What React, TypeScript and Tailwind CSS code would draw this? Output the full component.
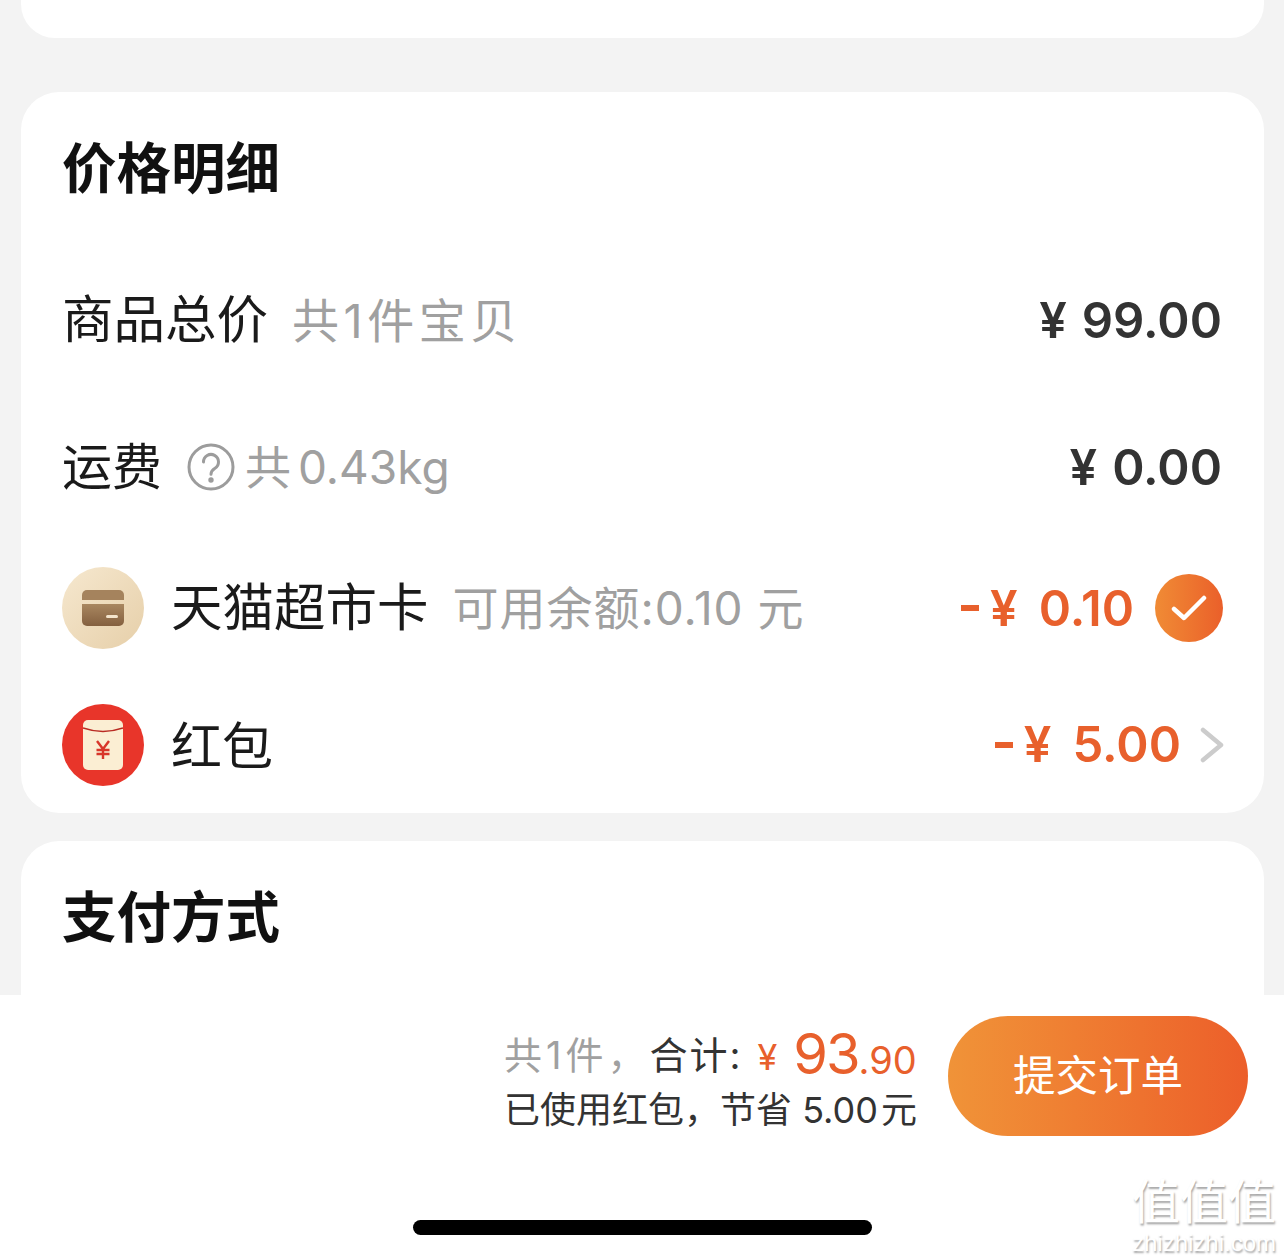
import React from "react";

const zh = "font-['Inter','Noto_Sans_CJK_SC',sans-serif]";

function CardIcon() {
  return (
    <div className="w-[82px] h-[82px] shrink-0 rounded-full bg-gradient-to-br from-[#f6e8cf] to-[#e6cfa9] flex items-center justify-center">
      <svg width="44" height="36" viewBox="0 0 44 36">
        <defs>
          <linearGradient id="cardg" x1="0" y1="0" x2="0" y2="1">
            <stop offset="0" stopColor="#a98760" />
            <stop offset="1" stopColor="#84603f" />
          </linearGradient>
        </defs>
        <path d="M1 10V5a5 5 0 0 1 5-5h32a5 5 0 0 1 5 5v5z" fill="#a5835d" />
        <path d="M1 14h42v17a5 5 0 0 1-5 5H6a5 5 0 0 1-5-5z" fill="url(#cardg)" />
        <rect x="25" y="25" width="12" height="3" rx="1.5" fill="#f3e4cc" />
      </svg>
    </div>
  );
}

function PacketIcon() {
  return (
    <div className="w-[82px] h-[82px] shrink-0 rounded-full bg-[#e8352a] flex items-center justify-center">
      <svg width="40" height="50" viewBox="0 0 40 50">
        <rect x="0" y="0" width="40" height="50" rx="5" fill="#fbeed3" />
        <path d="M0 8Q20 15 40 8" fill="none" stroke="#b92a22" strokeWidth="1.5" />
        <path d="M14 21l6 8 6-8M13.5 30h13M13.5 34h13M20 29v10" fill="none" stroke="#d8362a" strokeWidth="2.4" />
      </svg>
    </div>
  );
}

function Amount({ value, orange }: { value: string; orange?: boolean }) {
  return (
    <div className={`flex items-center font-['Inter',sans-serif] font-semibold text-[49px] leading-none ${orange ? "text-[#e8602c]" : "text-[#333333]"}`}>
      {orange && <span className="mr-[11px] w-[18px] h-[6px] bg-[#e8602c]" />}
      <span className={orange ? "mr-[21px]" : "mr-[15px]"}>¥</span>
      <span>{value}</span>
    </div>
  );
}

export default function App() {
  return (
    <div className={`w-[1284px] h-[1259px] overflow-hidden relative flex flex-col bg-[#f3f3f3] ${zh}`}>
      <main className="h-[995px] overflow-hidden pl-[21px] pr-[20px] shrink-0">
        <div className="h-[38px] bg-white rounded-b-[34px]" />

        <section className="mt-[54px] h-[721px] bg-white rounded-[38px] pl-[41px] pr-[42px]">
          <h2 className="h-[150px] mb-[4px] pt-[2px] flex items-center text-[54.5px] font-bold text-[#111111] leading-none">价格明细</h2>

          <div className="h-[148px] flex items-center justify-between">
            <div className="flex items-center">
              <span className="text-[51.5px] text-[#1a1a1a] leading-none">商品总价</span>
              <span className="ml-[24px] text-[47px] text-[#a0a0a0] leading-none tracking-[4.5px]">共1件宝贝</span>
            </div>
            <Amount value="99.00" />
          </div>

          <div className="h-[146px] flex items-center justify-between">
            <div className="flex items-center">
              <span className="text-[50px] text-[#1a1a1a] leading-none">运费</span>
              <svg className="ml-[25px]" width="48" height="48" viewBox="0 0 48 48" fill="none" stroke="#9c9c9c" strokeWidth="3" strokeLinecap="round">
                <circle cx="24" cy="24" r="22" />
                <path d="M16.5 19a7.5 7.5 0 1 1 11.5 6.3c-2.6 1.7-4 3-4 6" />
                <circle cx="24" cy="37" r="1.2" fill="#9c9c9c" />
              </svg>
              <span className="ml-[10px] text-[46px] text-[#a0a0a0] leading-none">
                共<span className="ml-[7px]">0.43kg</span>
              </span>
            </div>
            <Amount value="0.00" />
          </div>

          <div className="h-[136px] flex items-center justify-between">
            <div className="flex items-center">
              <CardIcon />
              <span className="ml-[27px] text-[51.5px] text-[#1a1a1a] leading-none">天猫超市卡</span>
              <span className="ml-[24px] text-[46px] text-[#a0a0a0] leading-none tracking-[1px]">可用余额:0.10 元</span>
            </div>
            <div className="flex items-center">
              <Amount value="0.10" orange />
              <div className="ml-[21px] -mr-[1px] w-[68px] h-[68px] rounded-full bg-gradient-to-r from-[#f08b35] to-[#ea5f2a] flex items-center justify-center">
                <svg width="36" height="28" viewBox="0 0 36 28" fill="none" stroke="#ffffff" strokeWidth="4.5" strokeLinecap="round" strokeLinejoin="round">
                  <path d="M3 15l10 9L33 4" />
                </svg>
              </div>
            </div>
          </div>

          <div className="h-[137px] flex items-center justify-between">
            <div className="flex items-center">
              <PacketIcon />
              <span className="ml-[27px] mt-[3px] text-[51px] text-[#1a1a1a] leading-none">红包</span>
            </div>
            <div className="flex items-center">
              <Amount value="5.00" orange />
              <svg className="ml-[19px] -mr-[2px]" width="24" height="36" viewBox="0 0 24 36" fill="none" stroke="#cccccc" strokeWidth="4.5" strokeLinecap="round" strokeLinejoin="round">
                <path d="M3 3l18 15L3 33" />
              </svg>
            </div>
          </div>
        </section>

        <section className="mt-[28px] h-[300px] bg-white rounded-[38px] pl-[41px]">
          <h2 className="h-[150px] pt-[2px] flex items-center text-[54.5px] font-bold text-[#111111] leading-none">支付方式</h2>
        </section>
      </main>

      <footer className="flex-1 bg-white flex flex-col">
        <div className="flex justify-end pt-[21px] pr-[36px]">
          <div className="w-[412px] pt-[10px]">
            <div className="h-[58px] flex items-baseline whitespace-nowrap">
              <span className="-translate-y-[5px] text-[38px] text-[#a0a0a0] leading-none tracking-[4px]">共1件，</span>
              <span className="-translate-y-[5px] text-[38px] text-[#333333] leading-none tracking-[2px]">合计:</span>
              <span className="-translate-y-[4px] ml-[15px] text-[36px] text-[#e8602c] leading-none">¥</span>
              <span className="ml-[16px] text-[56px] text-[#e8602c] leading-none tracking-[-2px]">93</span>
              <span className="text-[38px] text-[#e8602c] leading-none">.90</span>
            </div>
            <div className="mt-[3px] text-[36px] text-[#333333] leading-[46px] whitespace-nowrap">
              已使用红包，节省 5.00<span className="ml-[3px]">元</span>
            </div>
          </div>
          <button className="ml-[32px] w-[300px] h-[120px] rounded-full bg-gradient-to-r from-[#f09338] to-[#ec5e2a] text-white text-[42.5px] leading-none">提交订单</button>
        </div>
        <div className="mt-[84px] ml-[413px] w-[459px] h-[15px] rounded-full bg-black" />
      </footer>

      <div className="absolute left-[1131px] top-[1178px] w-[146px] text-center text-white [text-shadow:1px_2px_2px_rgba(0,0,0,0.35)] pointer-events-none">
        <div className="text-[48px] leading-[48px] whitespace-nowrap">值值值</div>
        <div className="mt-[6px] font-['Liberation_Sans',sans-serif] text-[24px] leading-[22px] whitespace-nowrap">zhizhizhi.com</div>
      </div>
    </div>
  );
}
